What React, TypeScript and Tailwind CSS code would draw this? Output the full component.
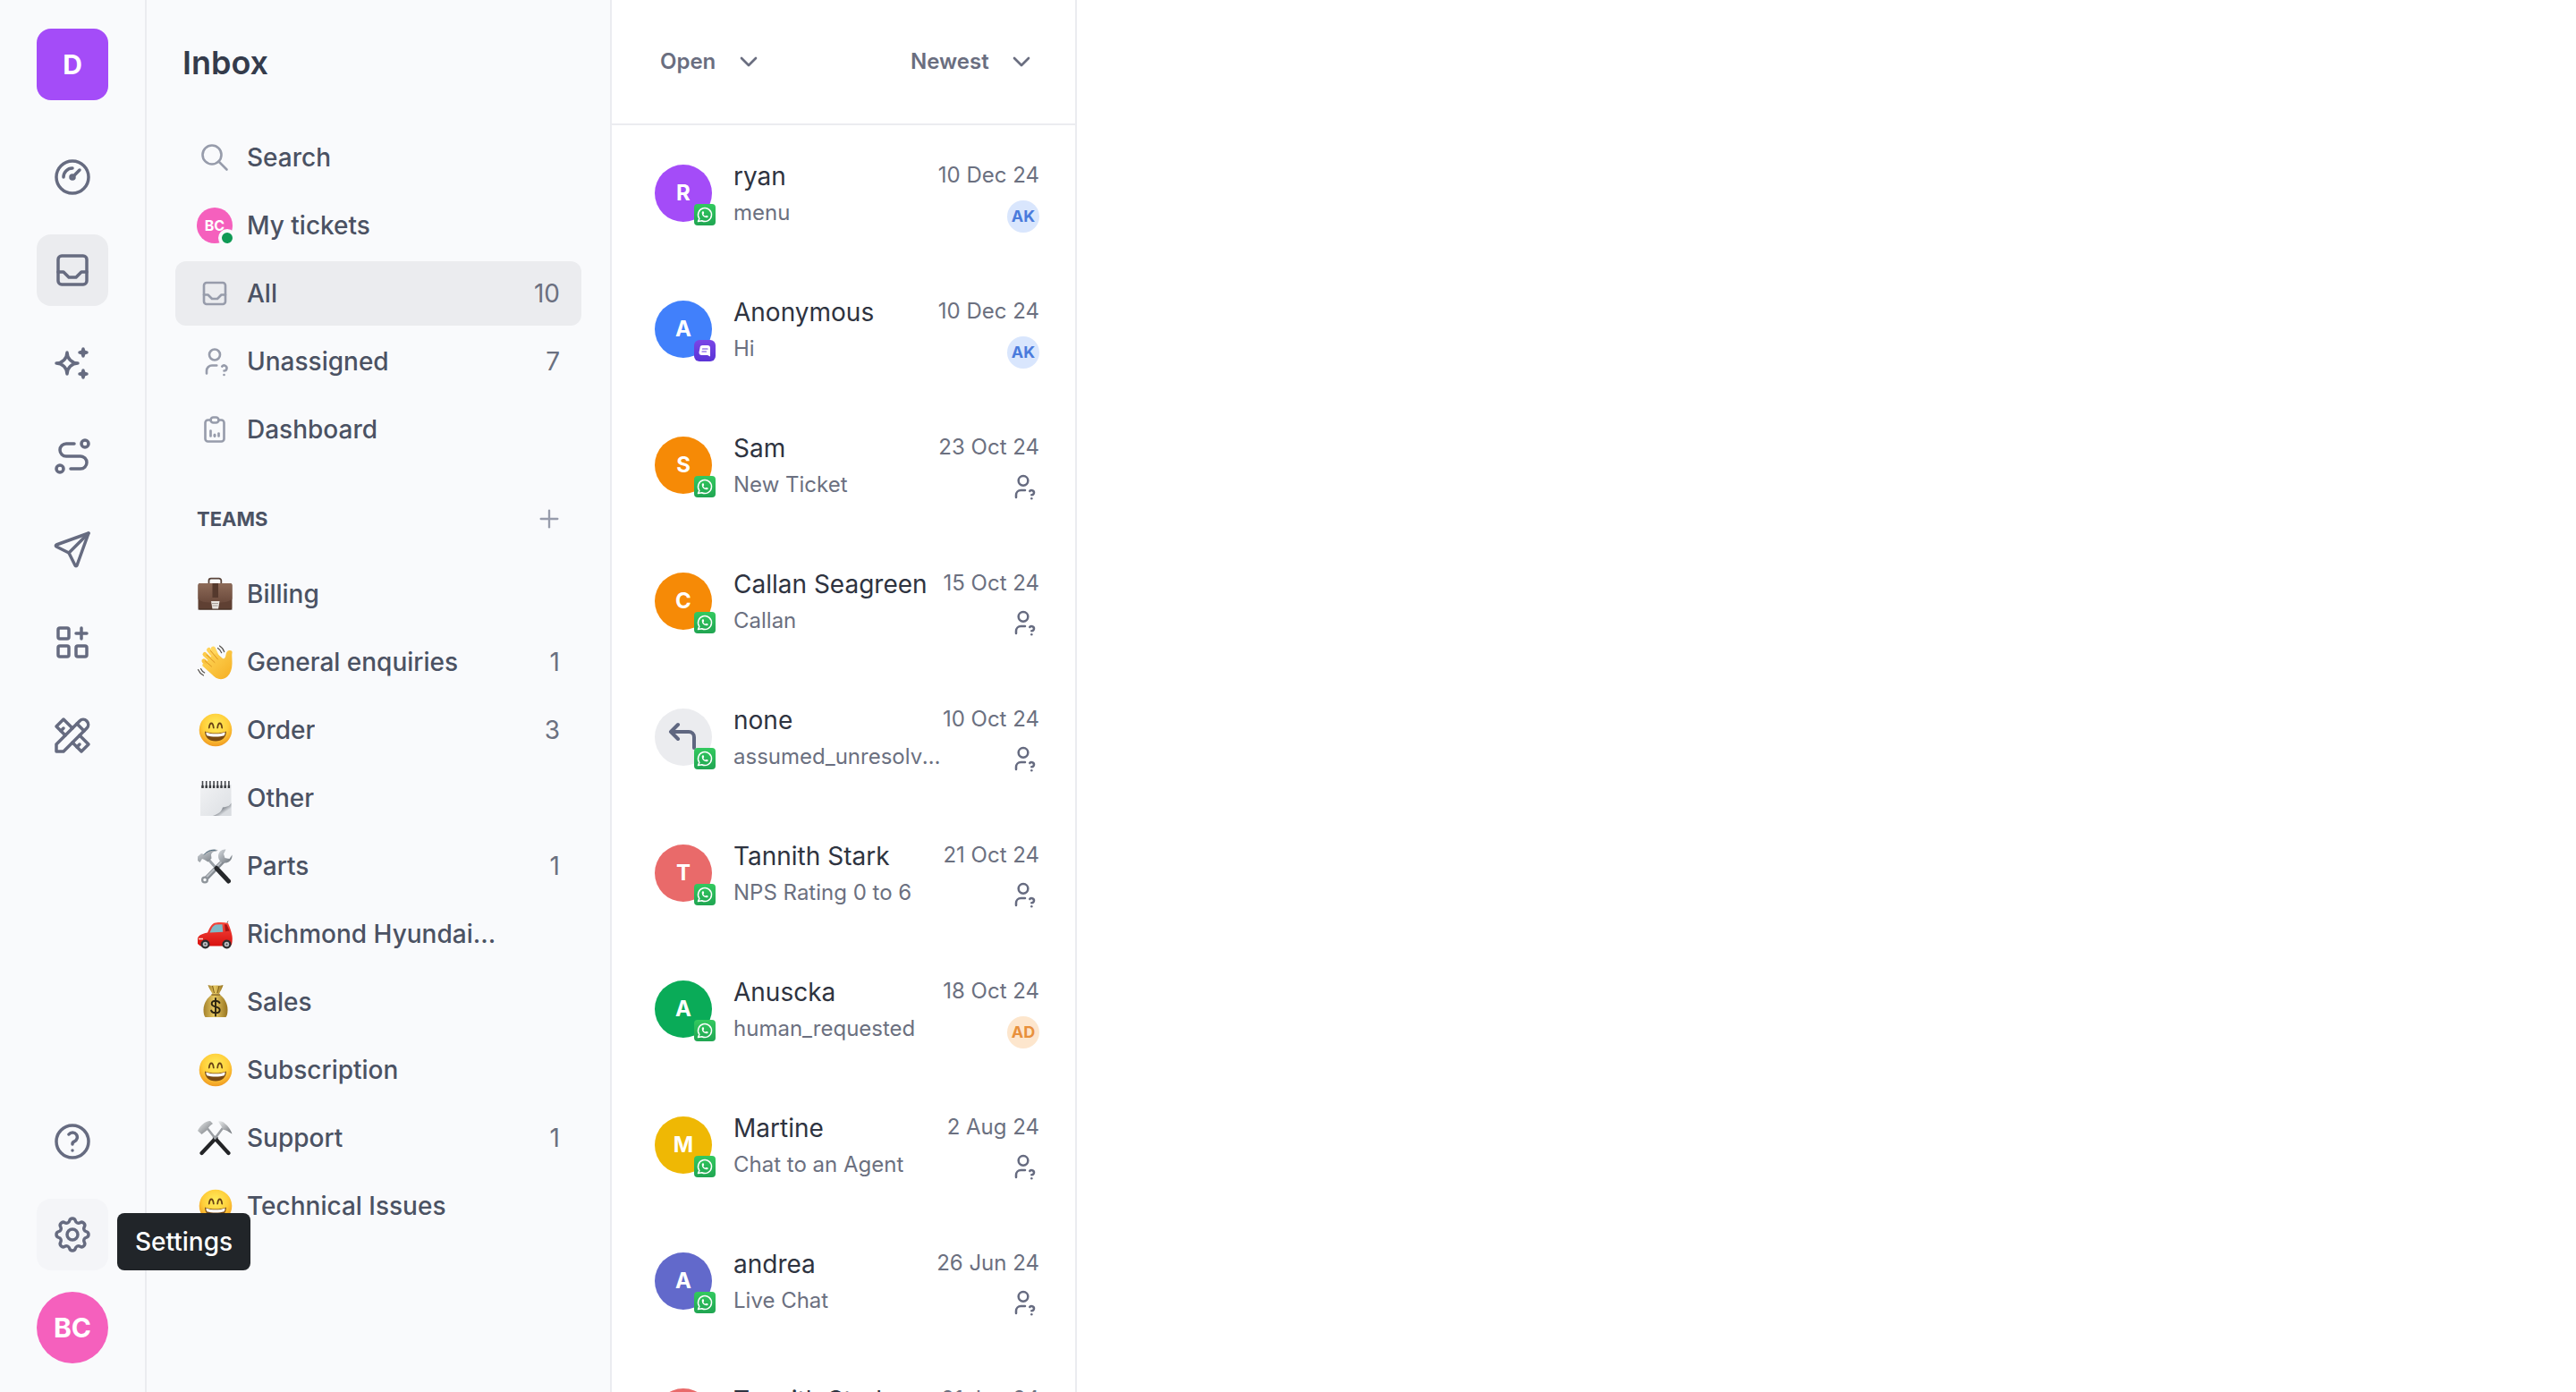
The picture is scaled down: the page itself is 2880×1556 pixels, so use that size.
import type { ReactNode } from "react";
import type { IconType } from "react-icons";
import {
  TbApps,
  TbBrandWhatsapp,
  TbChevronDown,
  TbClipboardData,
  TbCornerUpLeft,
  TbGauge,
  TbHelp,
  TbInbox,
  TbPlus,
  TbRoute,
  TbSearch,
  TbSend,
  TbSettings,
  TbSparkles,
  TbTools,
  TbUserQuestion,
} from "react-icons/tb";

function Briefcase() {
  return (
    <svg viewBox="0 0 40 40" className="size-10" aria-hidden="true">
      <defs>
        <linearGradient id="case-top" x1="0" y1="0" x2="0" y2="1">
          <stop offset="0" stopColor="#8d6a58" />
          <stop offset="1" stopColor="#6b4a3c" />
        </linearGradient>
      </defs>
      <path d="M13.5 8V5a2.400 2.400 0 0 1 2.400-2.400h9a2.400 2.400 0 0 1 2.400 2.400v3" fill="none" stroke="#5a443a" strokeWidth="1.800" />
      <rect x="1.500" y="8" width="38" height="29.500" rx="2" fill="#5f4033" />
      <path d="M1.500 10.500a2.500 2.500 0 0 1 2.500-2.500h33a2.500 2.500 0 0 1 2.500 2.500v15c-3 3-8 4-12 4H13.500c-4 0-9-1-12-4z" fill="url(#case-top)" />
      <rect x="17.500" y="8" width="6.500" height="16" fill="#55392d" />
      <path d="M16 28h9.500l-1.500 9h-6.500z" fill="#e9e4df" />
      <path d="M17 30.500h7M17.500 33h6" stroke="#a79d96" strokeWidth="1" />
      <path d="M1.500 37h38" stroke="#3f2a21" strokeWidth="1.200" />
    </svg>
  );
}

function WavingHand() {
  return (
    <svg viewBox="0 0 40 40" className="size-10" aria-hidden="true">
      <defs>
        <linearGradient id="hand" x1="0" y1="0" x2="1" y2="1">
          <stop offset="0" stopColor="#ffd95c" />
          <stop offset="1" stopColor="#f5ae22" />
        </linearGradient>
      </defs>
      <g strokeWidth="5" strokeLinecap="round" fill="none">
        <path d="M24 17 18.500 5" stroke="#ffd75f" />
        <path d="M21 16 13.500 6.500" stroke="#ffd257" />
        <path d="M17 19 9 11.500" stroke="#fdcb4a" />
        <path d="M15 25 8 19" stroke="#fac440" />
      </g>
      <path d="M13 16 22 10l7 6c2 1 3-1 3.500-4 .5-3 2-5 4.500-5 2 0 3 1 2.500 3-.6 3 .2 7 0 12-.2 8-3 14-9 16.500-5 2-10-.5-14-5L6.500 24.500c-1-3 2-3.500 4-1.500z" fill="url(#hand)" />
      <path d="M11 12 20 20.500M15.500 7.500 23.500 17M9.500 19l7 6" stroke="#dc9422" strokeWidth="1" strokeLinecap="round" />
      <path d="M23.500 4.500c2 1.200 3.400 3 4.200 5.200M25.500 2c2.600 1.600 4.400 3.800 5.200 6.600M4.500 27.500c.9 2 2.300 3.500 4.200 4.500M1.500 28.500c1.200 2.900 3.200 5 6 6.500" fill="none" stroke="#55514d" strokeWidth="1.200" strokeLinecap="round" />
    </svg>
  );
}

function Grin() {
  return (
    <svg viewBox="0 0 40 40" className="size-10" aria-hidden="true">
      <defs>
        <radialGradient id="face" cx="0.500" cy="0.350" r="0.650">
          <stop offset="0" stopColor="#ffee5e" />
          <stop offset="0.600" stopColor="#ffce3a" />
          <stop offset="1" stopColor="#f09a22" />
        </radialGradient>
      </defs>
      <circle cx="21" cy="20" r="18.300" fill="url(#face)" />
      <path d="M13.800 17.500c.4-3.400 1.300-5 2.500-5s2.100 1.600 2.500 5M23.200 17.500c.4-3.400 1.300-5 2.500-5s2.100 1.600 2.500 5" fill="none" stroke="#694115" strokeWidth="1.800" strokeLinecap="round" />
      <path d="M9 21.500c3.500 1.400 7.500 2 12 2s8.500-.6 12-2c0 6.500-4.500 11-12 11s-12-4.500-12-11z" fill="#7a4a12" />
      <path d="M10.300 22.400c3.200 1.300 7 1.800 10.700 1.800s7.500-.5 10.700-1.800c0 1.500-.4 2.800-1 3.800-2.700.9-6.200 1.300-9.700 1.300s-7-.4-9.700-1.300c-.6-1-1-2.300-1-3.800z" fill="#fff" />
    </svg>
  );
}

function Notepad() {
  return (
    <svg viewBox="0 0 40 40" className="size-10" aria-hidden="true">
      <defs>
        <linearGradient id="sheet" x1="0" y1="0" x2="1" y2="1">
          <stop offset="0" stopColor="#f1f2f4" />
          <stop offset="1" stopColor="#dcdfe3" />
        </linearGradient>
        <linearGradient id="curl" x1="0" y1="0" x2="1" y2="1">
          <stop offset="0.150" stopColor="#f7f8f9" />
          <stop offset="0.450" stopColor="#7f848b" />
          <stop offset="0.700" stopColor="#d9dce0" />
        </linearGradient>
      </defs>
      <path d="M4 5h34.500v35H4z" fill="url(#sheet)" />
      <path d="M38.500 25.500c-2 4-5 4.500-9.500 5C28 35 24 38 18 40h20.500z" fill="url(#curl)" />
      <path d="M6.500 1v7.500M10.700 1v7.500M14.900 1v7.500M19.100 1v7.500M23.300 1v7.500M27.500 1v7.500M31.700 1v7.500M35.900 1v7.500" stroke="#44474c" strokeWidth="1.600" />
      <path d="M6.500 6v3M10.700 6v3M14.900 6v3M19.100 6v3M23.300 6v3M27.500 6v3M31.700 6v3M35.900 6v3" stroke="#3a3c40" strokeWidth="2.400" />
    </svg>
  );
}

function HammerWrench() {
  return (
    <svg viewBox="0 0 40 40" className="size-10" aria-hidden="true">
      <defs>
        <linearGradient id="steel" x1="0" y1="0" x2="1" y2="1">
          <stop offset="0" stopColor="#d5d9dd" />
          <stop offset="1" stopColor="#6d747b" />
        </linearGradient>
      </defs>
      <path d="M30 14 9 35.500" stroke="#858b92" strokeWidth="5" strokeLinecap="round" />
      <path d="M27 16 9 34.500" stroke="#b9bec3" strokeWidth="2" strokeLinecap="round" />
      <circle cx="9" cy="35.500" r="4" fill="#8f959b" />
      <circle cx="9" cy="35.500" r="1.700" fill="#f9fafc" />
      <path d="M32.500 1.500c-4.500-.5-8.500 2.500-8.500 7.500 0 4.500 3 7.500 7.500 7.500 5 0 8.500-4 8-9l-3 4.500-5-1-1.500-4.500z" fill="url(#steel)" />
      <path d="M12 11.500 23 24" stroke="#9aa0a6" strokeWidth="3" />
      <path d="M22 22.500 35.500 37" stroke="#26282b" strokeWidth="5" strokeLinecap="round" />
      <path d="M1 9.500 5 6l3 1c4-5 9-6.500 15.500-5l-1.500 1.500c-3.500 0-5.500 1.500-6 4l.5 4-4 4-4-2.500L6 12l-2.500 4L1 14z" fill="url(#steel)" />
      <path d="M8 7.500c3.500-4 7.500-5.500 13-5.200" stroke="#4f6b7d" strokeWidth="1" fill="none" />
    </svg>
  );
}

function Car() {
  return (
    <svg viewBox="0 0 40 40" className="size-10" aria-hidden="true">
      <defs>
        <linearGradient id="body" x1="0" y1="0" x2="0" y2="1">
          <stop offset="0" stopColor="#f5473b" />
          <stop offset="1" stopColor="#d8100f" />
        </linearGradient>
      </defs>
      <path d="M33.500 8.500 35 5.500" stroke="#555" strokeWidth="0.800" />
      <path d="M1 26c0-4 4-6 11-7.500C15 12 17 8 21 7.500c5-.7 10-.5 14 .5 2 4 3.500 9 4.500 14 .5 3 .3 7-.5 10l-2.500 1.500H4L1 31z" fill="url(#body)" />
      <path d="M14.500 18.500c2-5 4-8.500 7-9l7-.3.800 8.500z" fill="#7fb9c6" />
      <path d="M31 9.200l2.500.3 3 7-4.500.8z" fill="#a51313" />
      <path d="M2 25.500h5" stroke="#ffd7c8" strokeWidth="1.500" />
      <circle cx="9.500" cy="31.500" r="5" fill="#2c2c2e" />
      <circle cx="9.500" cy="31.500" r="2.800" fill="#b9bcc0" />
      <circle cx="33.500" cy="31.500" r="5" fill="#2c2c2e" />
      <circle cx="33.500" cy="31.500" r="2.800" fill="#b9bcc0" />
      <circle cx="9.500" cy="31.500" r="1" fill="#4b4d50" />
      <circle cx="33.500" cy="31.500" r="1" fill="#4b4d50" />
    </svg>
  );
}

function MoneyBag() {
  return (
    <svg viewBox="0 0 40 40" className="size-10" aria-hidden="true">
      <defs>
        <linearGradient id="bag" x1="0" y1="0" x2="1" y2="0">
          <stop offset="0" stopColor="#a4812c" />
          <stop offset="0.450" stopColor="#e6c862" />
          <stop offset="1" stopColor="#97731f" />
        </linearGradient>
      </defs>
      <path d="M12.500 1c3 1 5 .5 8 .5s6 .5 9-.5c-1 4-3 6.500-4.500 10h-7.500C16 7.500 13.500 5 12.500 1z" fill="url(#bag)" />
      <path d="M17.500 2l2 8M25 2l-2 8" stroke="#7d5d18" strokeWidth="1" />
      <path d="M17 11.500h8.500c5 3.500 9 10 9 17 0 4-.5 6.500-2 8.500h-23C8 35 7.500 32.500 7.500 28.500c0-7 4.500-13.500 9.500-17z" fill="url(#bag)" />
      <path d="M17 12h8.500" stroke="#8b6a20" strokeWidth="1.500" strokeLinecap="round" />
      <path d="M25.500 21c-.8-1.500-2.300-2.300-4.500-2.300-2.700 0-4.300 1.300-4.300 3.200 0 4.600 9 2.400 9 7 0 2.100-1.800 3.400-4.700 3.400-2.500 0-4.200-.9-4.900-2.700M21 16v19.500" fill="none" stroke="#2c2410" strokeWidth="1.900" strokeLinecap="round" />
    </svg>
  );
}

function HammerPick() {
  return (
    <svg viewBox="0 0 40 40" className="size-10" aria-hidden="true">
      <defs>
        <linearGradient id="iron" x1="0" y1="0" x2="1" y2="1">
          <stop offset="0" stopColor="#eceeef" />
          <stop offset="1" stopColor="#6b6f74" />
        </linearGradient>
      </defs>
      <path d="M20 20 35.500 37M21.500 20 5.500 37" stroke="#232427" strokeWidth="4.200" strokeLinecap="round" />
      <path d="M12 9.500 21 21M29 9 20 21" stroke="#9b9fa4" strokeWidth="2.600" />
      <path d="M1 12C4 6 9 1.500 15 1l3 3c-3 2-5 3.500-5.500 6.500L5.500 16z" fill="url(#iron)" />
      <path d="M24 1.500c3-.8 5.500 0 7.500 2.500 3.500 2.500 6.500 6.500 8 11.500-4-2.500-7-4.500-10.500-5-1-3.500-3-5.500-5-9z" fill="url(#iron)" />
    </svg>
  );
}

function ChatMark() {
  return (
    <svg viewBox="0 0 24 24" className="size-6" aria-hidden="true">
      <path d="M9.500 6h5.500a3 3 0 0 1 3 3v9.500l-3-1.500H8.500a3 3 0 0 1-3-3l1-5a3 3 0 0 1 3-3z" fill="#fff" />
      <path d="M9.500 10h5.500M9 13h4.500" stroke="#6a3be0" strokeWidth="1.200" strokeLinecap="round" />
    </svg>
  );
}

function RailButton({ label, icon: Icon, tone = "" }: { label: string; icon: IconType; tone?: string }) {
  return (
    <button type="button" aria-label={label} className={`grid size-20 place-items-center rounded-2xl text-[#666b80] ${tone}`}>
      <Icon className="size-12 stroke-[1.75]" />
    </button>
  );
}

function NavRow({ lead, label, count, active = false }: { lead: ReactNode; label: string; count?: number; active?: boolean }) {
  return (
    <li>
      <a href="#" className={`flex h-18 items-center gap-4 rounded-xl px-6 ${active ? "bg-[#ebecef]" : ""}`}>
        <span className="grid size-10 shrink-0 place-items-center text-[#979cab]">{lead}</span>
        <span className="max-w-[280px] truncate font-medium text-[#4b5263]">{label}</span>
        {count !== undefined && <span className="ml-auto text-[#6b7080]">{count}</span>}
      </a>
    </li>
  );
}

function Picker({ label, value }: { label: string; value: string }) {
  return (
    <div className="relative flex items-center text-2xl font-semibold text-[#6a6e80]">
      <select aria-label={label} className="h-10 appearance-none bg-transparent pr-13">
        <option>{value}</option>
      </select>
      <TbChevronDown className="pointer-events-none absolute right-0 size-8 stroke-2" />
    </div>
  );
}

type Ticket = {
  name: string;
  text: string;
  date: string;
  avatar: string;
  initial?: string;
  agent?: string;
  agentTone?: string;
  web?: boolean;
};

const agentBlue = "bg-[#d9e6fd] text-[#4a7bdc]";

const tickets: Ticket[] = [
  { name: "ryan", text: "menu", date: "10 Dec 24", initial: "R", avatar: "bg-[#a44cf8]", agent: "AK", agentTone: agentBlue },
  { name: "Anonymous", text: "Hi", date: "10 Dec 24", initial: "A", avatar: "bg-[#4180fb]", agent: "AK", agentTone: agentBlue, web: true },
  { name: "Sam", text: "New Ticket", date: "23 Oct 24", initial: "S", avatar: "bg-[#f68a06]" },
  { name: "Callan Seagreen", text: "Callan", date: "15 Oct 24", initial: "C", avatar: "bg-[#f68a06]" },
  { name: "none", text: "assumed_unresolved", date: "10 Oct 24", avatar: "bg-[#ebecef]" },
  { name: "Tannith Stark", text: "NPS Rating 0 to 6", date: "21 Oct 24", initial: "T", avatar: "bg-[#e96a6a]" },
  { name: "Anuscka", text: "human_requested", date: "18 Oct 24", initial: "A", avatar: "bg-[#0aab58]", agent: "AD", agentTone: "bg-[#fde6cd] text-[#e8903c]" },
  { name: "Martine", text: "Chat to an Agent", date: "2 Aug 24", initial: "M", avatar: "bg-[#efb804]" },
  { name: "andrea", text: "Live Chat", date: "26 Jun 24", initial: "A", avatar: "bg-[#6269cb]" },
  { name: "Tannith Stark", text: "Live Chat", date: "21 Jun 24", initial: "T", avatar: "bg-[#e96a6a]" },
];

function TicketRow({ ticket }: { ticket: Ticket }) {
  return (
    <li>
      <a href="#" className="flex h-38 pl-12 pr-10">
        <span className={`relative mt-11 grid size-16 shrink-0 place-items-center rounded-full text-2xl font-bold text-white ${ticket.avatar}`}>
          {ticket.initial ?? <TbCornerUpLeft className="size-12 text-[#5f6780]" />}
          {ticket.web ? (
            <span className="absolute -right-1 -bottom-1 rounded-md bg-linear-to-b from-[#7a45e6] to-[#5a34d6]">
              <ChatMark />
            </span>
          ) : (
            <span className="absolute -right-1 -bottom-1 grid size-6 place-items-center rounded-sm bg-linear-to-b from-[#33c95f] to-[#20a552]">
              <TbBrandWhatsapp className="size-5 stroke-[1.8]" />
            </span>
          )}
        </span>
        <span className="ml-6 grid min-w-0 flex-1 grid-cols-[minmax(0,1fr)_auto] content-start pt-9">
          <span className="text-[28px] leading-[42px] whitespace-nowrap text-[#2e3340]">{ticket.name}</span>
          <span className="text-right text-2xl leading-10 whitespace-nowrap text-[#6b7080]">{ticket.date}</span>
          <span className="col-span-2 flex justify-between">
            <span className="max-w-[236px] truncate text-2xl leading-10 text-[#6b7080]">{ticket.text}</span>
            {ticket.agent ? (
              <span className={`mt-[6px] grid size-9 place-items-center rounded-full text-lg font-bold ${ticket.agentTone}`}>{ticket.agent}</span>
            ) : (
              <TbUserQuestion className="mt-[6px] mr-[2px] size-8 stroke-[1.9] text-[#666b80]" />
            )}
          </span>
        </span>
      </a>
    </li>
  );
}

export default function App() {
  return (
    <div className="flex h-screen overflow-hidden bg-white font-['Inter',sans-serif] text-[28px] leading-10">
      <nav aria-label="Main" className="flex w-41 shrink-0 flex-col items-center border-r-2 border-[#ebecf0] bg-[#f9fafc] py-8">
        <button type="button" className="size-20 rounded-2xl bg-[#a44cf8] text-3xl font-bold text-white">D</button>
        <div className="mt-[46px] flex flex-col gap-6">
          <RailButton label="Overview" icon={TbGauge} />
          <RailButton label="Inbox" icon={TbInbox} tone="bg-[#ebecef]" />
          <RailButton label="Assistant" icon={TbSparkles} />
          <RailButton label="Flows" icon={TbRoute} />
          <RailButton label="Broadcasts" icon={TbSend} />
          <RailButton label="Apps" icon={TbApps} />
          <RailButton label="Tools" icon={TbTools} />
        </div>
        <div className="mt-auto flex flex-col gap-6">
          <RailButton label="Help" icon={TbHelp} />
          <div className="relative">
            <RailButton label="Settings" icon={TbSettings} tone="bg-[#f4f5f8]" />
            <span role="tooltip" className="absolute bottom-0 left-full z-10 ml-[10px] rounded-lg bg-[#212529] px-5 py-3 font-medium whitespace-nowrap text-white">
              Settings
            </span>
          </div>
          <button type="button" className="size-20 rounded-full bg-[#f560bd] text-3xl font-bold text-white">BC</button>
        </div>
      </nav>

      <aside className="w-[520px] shrink-0 border-r-2 border-[#ebecf0] bg-[#f9fafc] px-8">
        <h1 className="flex h-35 items-center pl-2 text-4xl font-semibold text-[#343b4b]">Inbox</h1>
        <ul className="flex flex-col gap-1">
          <NavRow lead={<TbSearch className="size-9 stroke-[1.75]" />} label="Search" />
          <NavRow
            lead={
              <span className="relative grid size-10 place-items-center rounded-full bg-[#f560bd] text-base font-bold text-white">
                BC
                <span className="absolute -right-1 -bottom-1 size-5 rounded-full border-4 border-[#f9fafc] bg-[#0f9a55]" />
              </span>
            }
            label="My tickets"
          />
          <NavRow lead={<TbInbox className="size-9 stroke-[1.75]" />} label="All" count={10} active />
          <NavRow lead={<TbUserQuestion className="size-9 stroke-[1.75]" />} label="Unassigned" count={7} />
          <NavRow lead={<TbClipboardData className="size-9 stroke-[1.75]" />} label="Dashboard" />
        </ul>
        <div className="mt-8 mb-4 flex h-16 items-center justify-between pr-5 pl-6">
          <h2 className="text-[22px] font-bold text-[#4b5263]">TEAMS</h2>
          <button type="button" aria-label="Add team" className="text-[#979cab]">
            <TbPlus className="size-8 stroke-[1.75]" />
          </button>
        </div>
        <ul className="flex flex-col gap-1">
          <NavRow lead={<Briefcase />} label="Billing" />
          <NavRow lead={<WavingHand />} label="General enquiries" count={1} />
          <NavRow lead={<Grin />} label="Order" count={3} />
          <NavRow lead={<Notepad />} label="Other" />
          <NavRow lead={<HammerWrench />} label="Parts" count={1} />
          <NavRow lead={<Car />} label="Richmond Hyundai Sales" />
          <NavRow lead={<MoneyBag />} label="Sales" />
          <NavRow lead={<Grin />} label="Subscription" />
          <NavRow lead={<HammerPick />} label="Support" count={1} />
          <NavRow lead={<Grin />} label="Technical Issues" />
        </ul>
      </aside>

      <section aria-label="Tickets" className="w-[520px] shrink-0 overflow-hidden border-r-2 border-[#ebecf0]">
        <header className="flex h-35 items-center justify-between border-b-2 border-[#ebecf0] pr-11 pl-[54px]">
          <Picker label="Status" value="Open" />
          <Picker label="Sort order" value="Newest" />
        </header>
        <ul>
          {tickets.map((ticket, index) => (
            <TicketRow key={index} ticket={ticket} />
          ))}
        </ul>
      </section>

      <main className="flex-1" />
    </div>
  );
}
